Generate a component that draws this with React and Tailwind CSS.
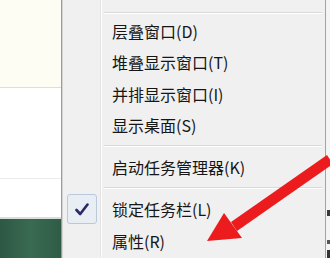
import React from 'react'

const items = [
  { label: '层叠窗口(D)' },
  { label: '堆叠显示窗口(T)' },
  { label: '并排显示窗口(I)' },
  { label: '显示桌面(S)' },
  { sep: true },
  { label: '启动任务管理器(K)' },
  { sep: true },
  { label: '锁定任务栏(L)', checked: true },
  { label: '属性(R)' },
]

function Gutter({ children, className = '' }) {
  return (
    <div className={`w-[38px] shrink-0 self-stretch flex items-center border-r border-r-[#e2e2e2] shadow-[1px_0_0_#ffffff] ${className}`}>
      {children}
    </div>
  )
}

function Separator() {
  return (
    <div className="flex h-[10.5px]">
      <Gutter />
      <div className="flex-1 flex flex-col justify-center pl-[3px] pr-[3px]">
        <div className="h-px bg-[#d9d9d9]" />
        <div className="h-px bg-white" />
      </div>
    </div>
  )
}

function Check() {
  return (
    <div className="ml-[4px] w-[30px] h-[30px] rounded-[3px] border border-[#b9c8dc] bg-[#e9eef5] flex items-center justify-center">
      <svg width="14" height="13" viewBox="0 0 14 13">
        <path d="M1.5 7 L5.2 11 L12.5 1.5" fill="none" stroke="#272a66" strokeWidth="2.6" strokeLinecap="round" strokeLinejoin="round" />
      </svg>
    </div>
  )
}

export default function App() {
  return (
    <div
      className="relative w-[330px] h-[258px] overflow-hidden flex bg-white"
      style={{ fontFamily: '"Noto Sans CJK SC", "Noto Sans", sans-serif' }}
    >
      {/* window behind the menu */}
      <div className="w-[61px] flex flex-col">
        <div className="h-[88px] bg-[#fdfdf4] border-b border-[#dedfd6]" />
        <div className="flex-1 bg-white flex flex-col">
          <div className="h-[90px]" />
          <div className="h-px bg-[#ececec]" />
        </div>
        <div className="h-[41px] border-t-2 border-[#d9dedb] bg-gradient-to-r from-[#2d5843] via-[#3a6a52] to-[#2f5c46]" />
      </div>
      <div className="w-px bg-[#9c9c9c]" />
      <div className="w-px bg-[#d4d4d4]" />

      {/* context menu */}
      <div className="w-[262px] bg-[#f0f0f0] flex flex-col text-[16px] text-[#161616]">
        <div className="flex h-[12px]">
          <Gutter />
          <div className="flex-1" />
        </div>
        <div className="flex h-[3px]">
          <Gutter />
          <div className="flex-1 flex flex-col pl-[3px] pr-[3px]">
            <div className="h-px bg-[#d9d9d9]" />
            <div className="h-px bg-white" />
          </div>
        </div>
        {items.map((item, i) =>
          item.sep ? (
            <Separator key={i} />
          ) : (
            <div key={i} className="flex h-[31.5px] items-center">
              <Gutter>{item.checked && <Check />}</Gutter>
              <span className="pl-[11px] leading-none">{item.label}</span>
            </div>
          )
        )}
      </div>
      <div className="w-px bg-[#a3a3a3]" />

      {/* strip of whatever sits behind, right side */}
      <div className="flex-1 bg-[#f4f4f4] flex flex-col items-end">
        <div className="h-[210px]" />
        <div className="h-[6px] w-[3px] bg-[#3a3a3a]" />
        <div className="h-[24px]" />
        <div className="h-[4px] w-[3px] bg-[#555555]" />
        <div className="h-[6px]" />
        <div className="h-[8px] w-[3px] bg-[#333333]" />
      </div>

      {/* red annotation arrow */}
      <svg className="absolute left-0 top-0" width="330" height="258" viewBox="0 0 330 258">
        <polygon points="333,164 327,155 231,222 237,231" fill="#ec1b1e" />
        <polygon points="207,241 224,213 242,238" fill="#ec1b1e" />
      </svg>
    </div>
  )
}
